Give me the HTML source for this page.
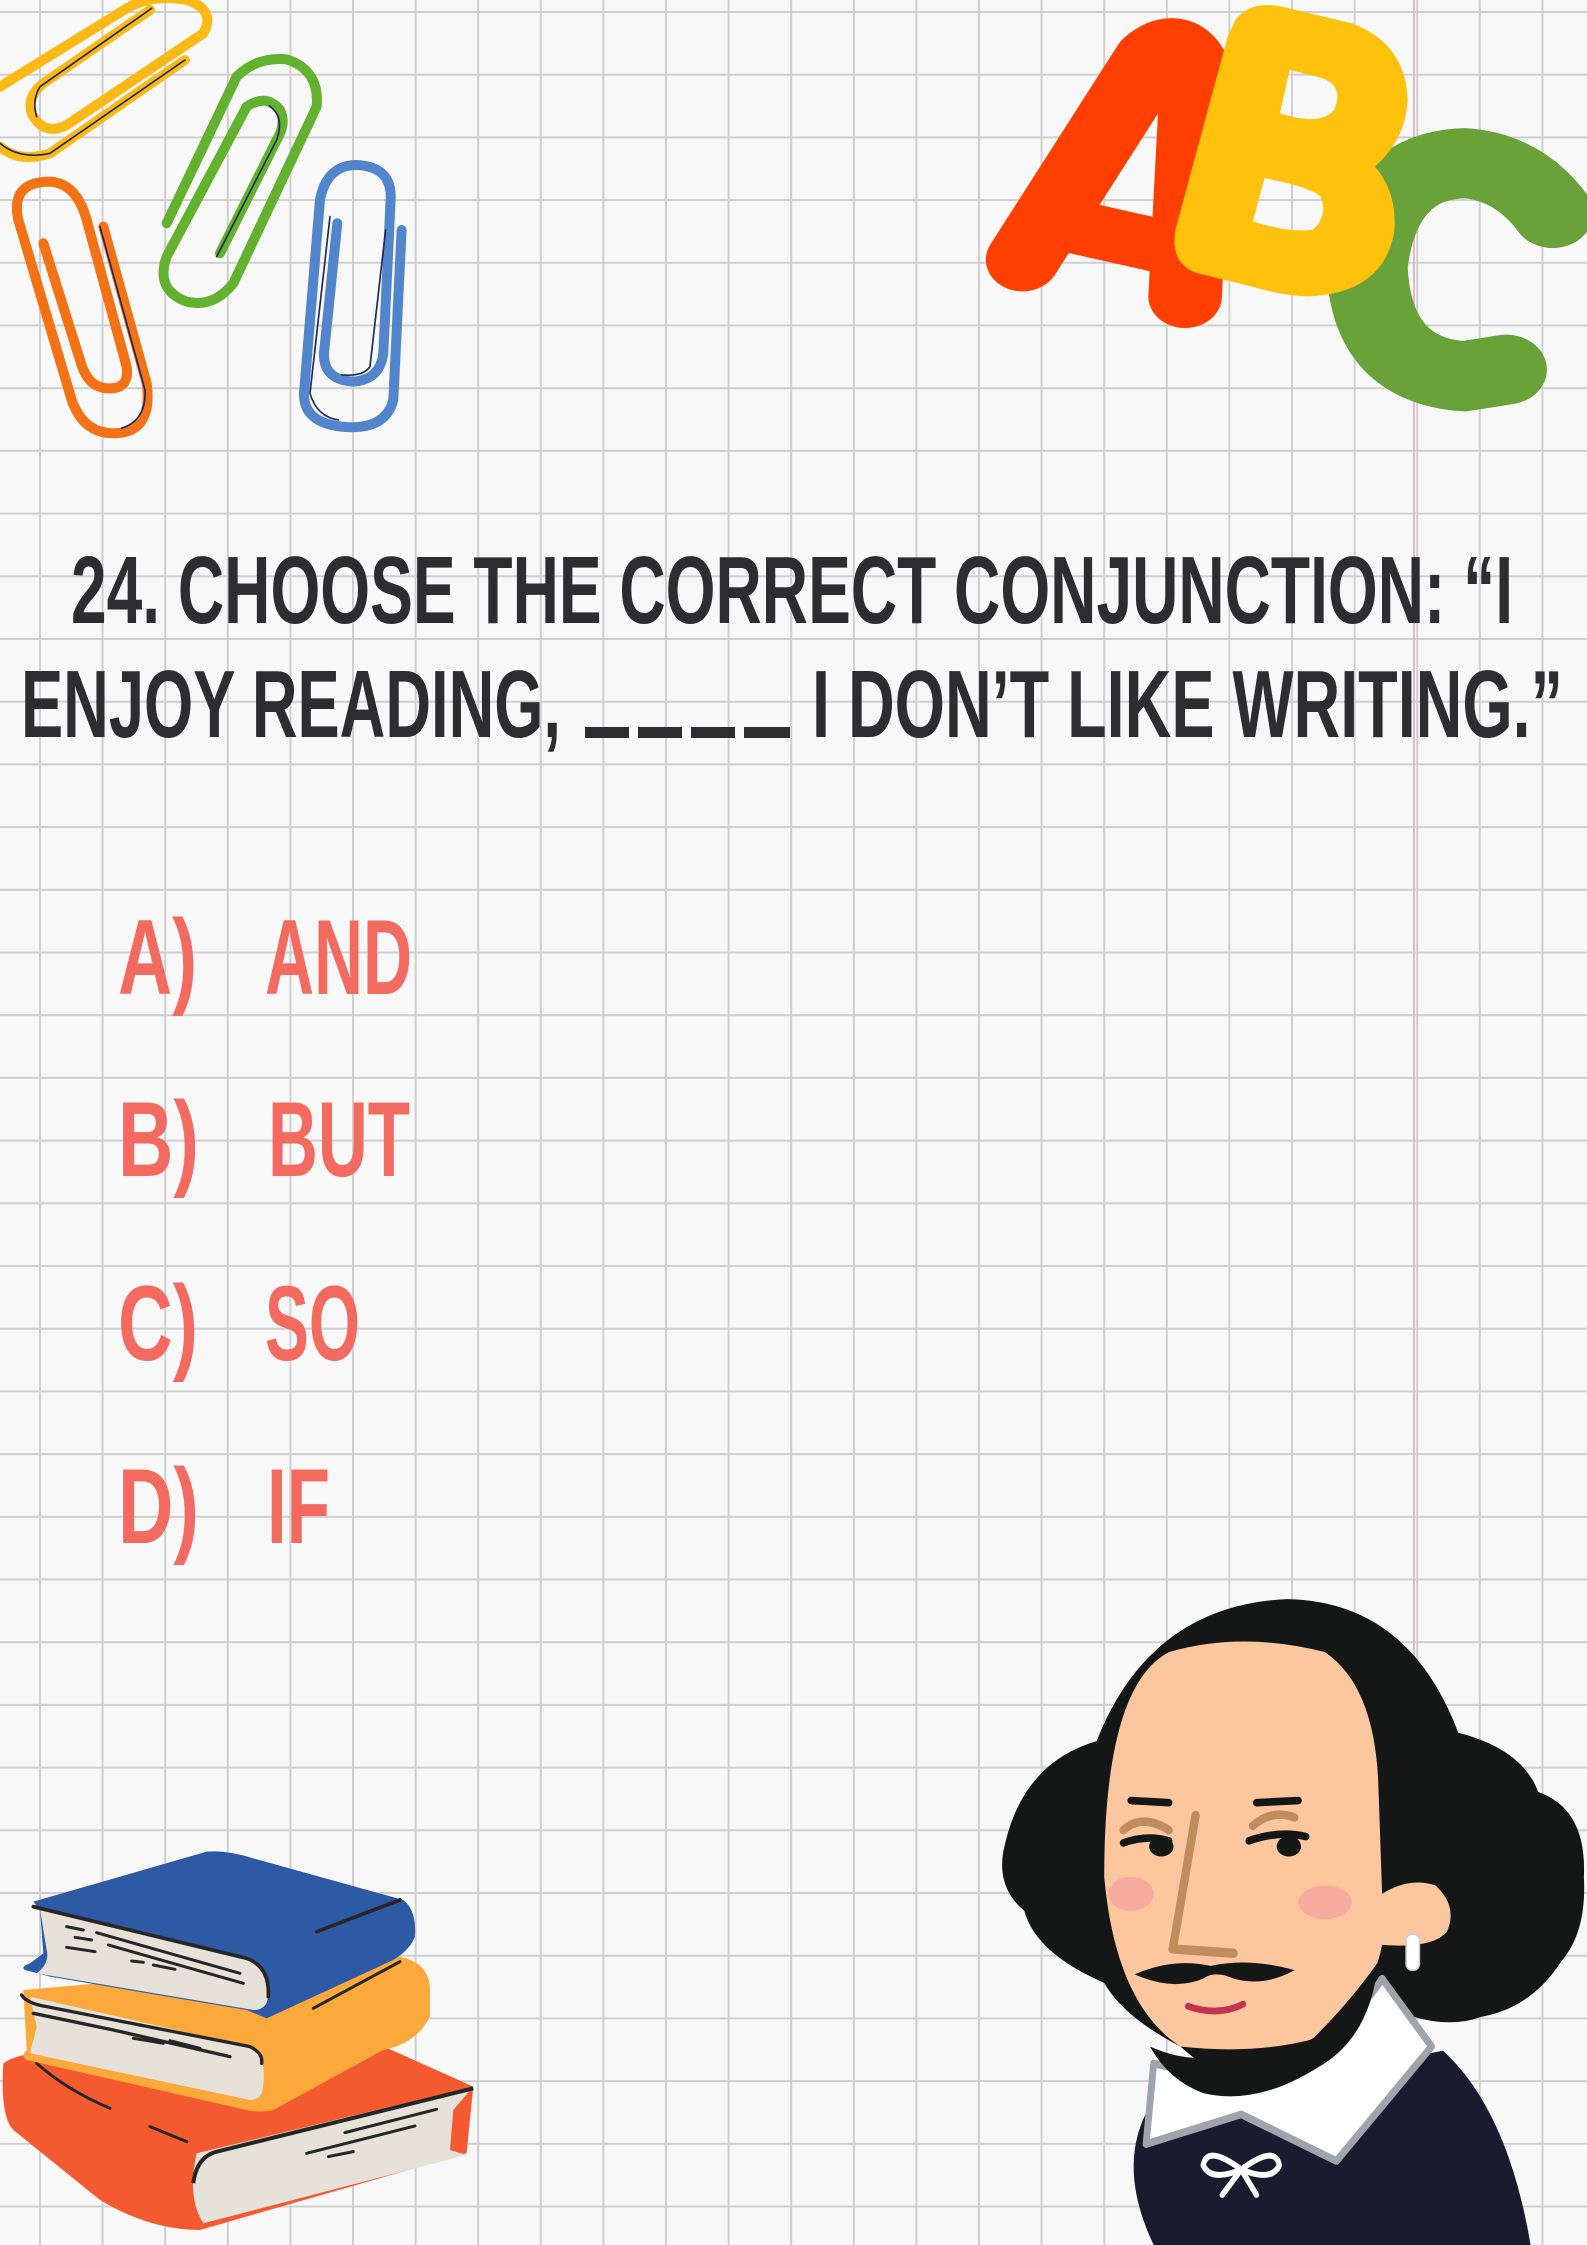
<!DOCTYPE html>
<html><head><meta charset="utf-8"><style>
html,body{margin:0;padding:0;background:#f7f7f7;}
svg{display:block;}
</style></head><body>
<svg width="1587" height="2245" viewBox="0 0 1587 2245" xmlns="http://www.w3.org/2000/svg">
<defs>
<pattern id="grid" x="39" y="11" width="62.6" height="62.7" patternUnits="userSpaceOnUse">
<rect x="0" y="0" width="2" height="62.7" fill="#cfcfd1"/>
<rect x="0" y="0" width="62.6" height="2" fill="#cfcfd1"/>
</pattern>
</defs>
<rect width="1587" height="2245" fill="#f8f8f8"/>
<rect width="1587" height="2245" fill="url(#grid)"/>
<rect x="1413" y="0" width="2" height="2245" fill="#e2b9c6"/>

<!-- paperclips -->
<g transform="scale(0.3333)" fill="none" stroke-linecap="round" stroke-linejoin="round">
<path d="M0,260 L380,25 Q460,-20 560,0 Q650,30 610,100 L200,375 Q130,410 95,340 Q80,290 130,250 L450,30" stroke="#fbb917" stroke-width="30"/>
<path d="M555,180 L150,460 Q60,490 0,440" stroke="#fbb917" stroke-width="30"/>
<path d="M455,25 L120,260 Q95,300 110,350 M555,180 L150,460 Q60,480 0,430" stroke="#1d2a5a" stroke-width="5"/>
<path d="M310,680 L440,1150 Q460,1300 340,1300 Q250,1300 215,1200 L55,660 Q30,545 150,545 Q230,550 260,660 L380,1100 Q390,1170 320,1165 Q260,1160 240,1080 L130,730" stroke="#f47216" stroke-width="30"/>
<path d="M300,680 L435,1170 Q440,1260 365,1285" stroke="#1d2a5a" stroke-width="5"/>
<path d="M500,670 L710,230 Q770,170 860,178 Q960,210 950,320 L700,850 Q640,925 560,905 Q465,870 500,770 L740,320 Q800,280 840,330 Q860,370 830,420 L660,760" stroke="#62b22f" stroke-width="30"/>
<path d="M808,318 Q855,350 830,420 L650,770" stroke="#1d2a5a" stroke-width="5"/>
<path d="M1205,690 L1180,1200 Q1160,1280 1060,1282 Q910,1280 912,1180 L960,600 Q980,495 1070,495 Q1178,500 1172,600 L1150,1060 Q1140,1140 1060,1145 Q970,1140 972,1060 L1012,670" stroke="#5385cc" stroke-width="30"/>
<path d="M990,650 L930,1180 Q950,1250 1015,1260 M1157,690 L1110,1100 Q1090,1130 1025,1125" stroke="#1d2a5a" stroke-width="5"/>
</g>

<!-- ABC -->
<g transform="translate(980,0) scale(0.387,0.333)">
<path d="M1480,640 Q1390,500 1250,490 Q1030,500 1000,800 Q1010,1110 1250,1130 L1360,1110" fill="none" stroke="#6aa23a" stroke-width="210" stroke-linecap="round"/>
<path d="M110,780 L440,180 Q520,100 560,230 L530,890" fill="none" stroke="#ff3f00" stroke-width="190" stroke-linecap="round" stroke-linejoin="round"/>
<path d="M240,680 L470,740" stroke="#ff3f00" stroke-width="160"/>
<path fill="#fec10c" fill-rule="evenodd" d="M660,60 Q700,0 780,20 L960,70 Q1100,130 1105,300 Q1100,420 1020,500 Q1080,580 1070,700 Q1040,880 850,890 Q790,890 700,860 L560,820 Q490,790 505,690 L640,110 Z M800,210 L775,340 Q880,380 915,330 Q945,250 870,230 Z M735,535 L705,665 Q800,700 860,690 Q900,650 880,590 Q850,560 735,535 Z"/>
</g>

<!-- Title -->
<g font-family="'Liberation Sans', sans-serif" font-weight="bold" fill="#2d2d2f" font-size="96">
<text x="71" y="623" textLength="1442" lengthAdjust="spacingAndGlyphs">24. CHOOSE THE CORRECT CONJUNCTION: “I</text>
<text x="21" y="737" textLength="540" lengthAdjust="spacingAndGlyphs">ENJOY READING,</text>
<text x="812" y="737" textLength="751" lengthAdjust="spacingAndGlyphs">I DON’T LIKE WRITING.”</text>
<rect x="585" y="727" width="44" height="11"/>
<rect x="638" y="727" width="44" height="11"/>
<rect x="691" y="727" width="44" height="11"/>
<rect x="744" y="727" width="46" height="11"/>
</g>

<!-- Options -->
<g font-family="'Liberation Sans', sans-serif" font-weight="bold" fill="#f26a60" font-size="107">
<text x="118" y="994" textLength="79" lengthAdjust="spacingAndGlyphs">A)</text>
<text x="265" y="994" textLength="147" lengthAdjust="spacingAndGlyphs">AND</text>
<text x="118" y="1176" textLength="81" lengthAdjust="spacingAndGlyphs">B)</text>
<text x="268" y="1176" textLength="142" lengthAdjust="spacingAndGlyphs">BUT</text>
<text x="118" y="1360" textLength="80" lengthAdjust="spacingAndGlyphs">C)</text>
<text x="265" y="1360" textLength="95" lengthAdjust="spacingAndGlyphs">SO</text>
<text x="118" y="1543" textLength="81" lengthAdjust="spacingAndGlyphs">D)</text>
<text x="267" y="1543" textLength="63" lengthAdjust="spacingAndGlyphs">IF</text>
</g>

<!-- Books -->
<g transform="translate(0,1830) scale(0.3333)">
<path d="M10,700 Q100,640 300,700 L1130,640 L1420,770 L1400,970 L600,1200 Q450,1200 300,1110 L40,900 Q0,860 10,700 Z" fill="#f45a30"/>
<path d="M590,970 L1420,770 L1360,840 L1350,960 L1400,975 L610,1180 Q560,1100 590,970 Z" fill="#e6e2d9"/>
<path d="M580,1060 Q590,980 650,965 L1420,775" fill="none" stroke="#262626" stroke-width="12"/>
<path d="M110,700 Q200,780 330,835 M450,890 L560,935 M920,970 L1245,888 M1035,908 L1310,838 M985,980 L1060,965" stroke="#262626" stroke-width="9" fill="none" stroke-linecap="round"/>
<path d="M70,480 L1200,380 Q1290,400 1290,480 L1290,560 Q1250,640 1150,660 L820,840 Q780,850 740,840 L80,690 Q60,680 80,660 L70,480 Z" fill="#fba93a"/>
<path d="M90,500 L750,650 Q800,680 790,760 Q790,810 750,810 L90,670 L110,590 Z" fill="#e6e2d9"/>
<path d="M65,495 Q80,520 140,530 L750,650 Q790,670 785,700 M100,550 L340,600 L690,680" fill="none" stroke="#262626" stroke-width="10" stroke-linecap="round"/>
<path d="M940,535 L1200,395 M400,625 L490,640 M510,632 L600,655" stroke="#262626" stroke-width="9" fill="none" stroke-linecap="round"/>
<path d="M100,215 L620,65 Q680,60 760,85 L1210,210 Q1250,240 1245,320 Q1230,360 1180,390 L800,565 L740,540 L150,440 L75,420 Q60,410 90,400 L130,370 L120,240 Z" fill="#2d59a5"/>
<path d="M120,235 L740,385 Q800,400 805,490 Q805,540 760,540 L110,430 Q150,400 140,360 L130,300 Z" fill="#e6e2d9"/>
<path d="M100,230 L740,385 Q810,410 805,500 M950,305 L1200,210" fill="none" stroke="#262626" stroke-width="11" stroke-linecap="round"/>
<path d="M200,290 L250,300 M225,322 L275,330 M200,352 L285,365 M290,308 L720,430 M325,345 L730,460 M395,393 L430,397 M460,405 L525,418" stroke="#262626" stroke-width="9" fill="none" stroke-linecap="round"/>
</g>

<!-- Shakespeare -->
<g transform="translate(990,1580) scale(0.3807,0.4241)">
<path d="M430,1568 Q330,1380 420,1240 L1190,1110 Q1360,1250 1420,1568 Z" fill="#1c1a2e"/>
<path d="M40,620 Q90,430 280,380 Q420,60 780,45 Q1100,50 1230,360 Q1400,400 1440,500 Q1568,540 1560,700 Q1568,830 1500,900 Q1420,1010 1290,1030 Q1200,1060 1080,1020 L900,1200 Q700,1260 500,1100 Q350,1030 300,950 Q120,880 90,780 Q10,720 40,620 Z" fill="#151716"/>
<path d="M430,1140 L410,1330 L660,1260 L910,1370 L1160,1100 L1030,940 Q900,1120 620,1180 Z" fill="#ffffff" stroke="#9ea4aa" stroke-width="18" stroke-linejoin="round"/>
<path d="M300,700 Q300,250 470,170 Q660,120 880,170 Q1010,250 1020,480 L1030,740 Q1100,700 1170,720 Q1230,770 1200,830 Q1160,870 1030,860 Q1000,1000 860,1080 Q700,1120 500,1100 Q330,1000 300,700 Z" fill="#fcc79f"/>
<path d="M420,1100 Q520,1140 600,1120 Q700,1150 850,1080 Q950,990 1020,900 Q1000,1080 860,1150 Q700,1240 560,1210 Q470,1180 420,1100 Z" fill="#151716"/>
<ellipse cx="370" cy="740" rx="60" ry="40" fill="#f7a0a0" opacity="0.7"/>
<ellipse cx="880" cy="760" rx="70" ry="40" fill="#f7a0a0" opacity="0.7"/>
<path d="M540,555 L480,870 L640,880" fill="none" stroke="#c18c5e" stroke-width="22" stroke-linecap="round" stroke-linejoin="round"/>
<path d="M350,590 Q400,550 470,590 M690,580 Q740,540 800,560" fill="none" stroke="#c18c5e" stroke-width="20" stroke-linecap="round"/>
<path d="M370,520 L470,525 M700,525 L810,520 M350,620 Q410,600 470,615 M680,615 Q760,590 830,605" fill="none" stroke="#151716" stroke-width="18" stroke-linecap="round"/>
<ellipse cx="450" cy="628" rx="32" ry="24" fill="#151716"/>
<ellipse cx="785" cy="628" rx="32" ry="24" fill="#151716"/>
<path d="M380,930 Q480,890 580,910 Q680,890 800,920 Q720,960 640,940 Q590,920 560,940 Q480,970 380,930 Z" fill="#151716"/>
<path d="M520,1005 Q600,1030 665,1000" fill="none" stroke="#c3344f" stroke-width="16" stroke-linecap="round"/>
<rect x="1093" y="835" width="35" height="85" rx="15" fill="#fff" stroke="#ccc" stroke-width="4"/>
<path d="M660,1390 Q570,1330 560,1380 Q580,1420 660,1390 Q750,1330 760,1380 Q740,1420 660,1390 L610,1450 M660,1390 L700,1450" fill="none" stroke="#fff" stroke-width="14" stroke-linecap="round"/>
</g>
</svg>
</body></html>
